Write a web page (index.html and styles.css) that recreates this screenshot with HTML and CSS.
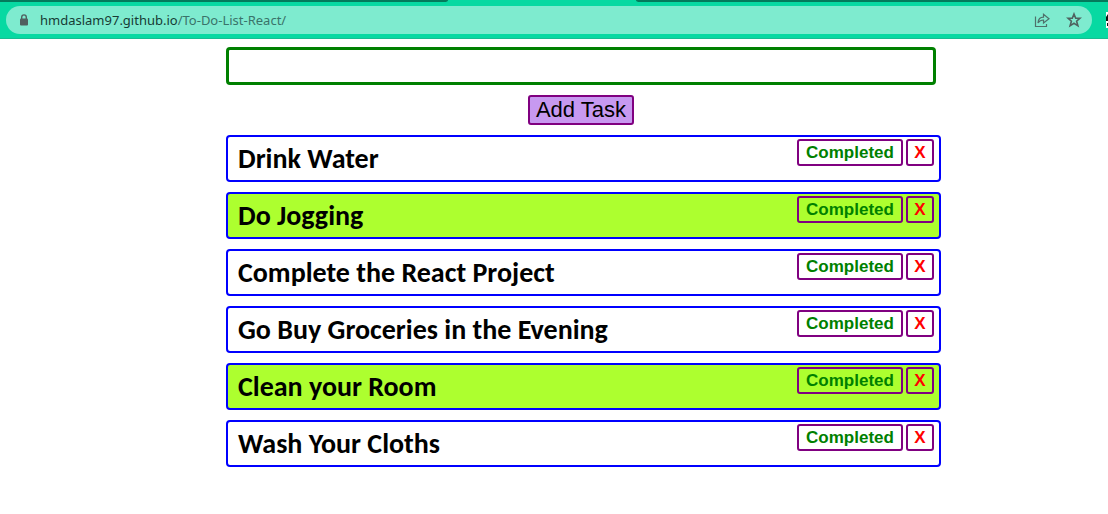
FILE: index.html
```html
<!DOCTYPE html>
<html lang="en">
<head>
<meta charset="utf-8">
<title>To-Do List</title>
<link rel="stylesheet" href="styles.css">
</head>
<body>
<header class="browser">
  <div class="tabs"><span class="tab-left"></span><span class="tab-right"></span></div>
  <div class="toolbar">
    <div class="address">
      <svg class="lock" width="10" height="12" viewBox="0 0 10 12" aria-hidden="true"><path d="M2.7 5V3.2a2.3 2.3 0 0 1 4.6 0V5" fill="none" stroke="#50605f" stroke-width="1.4"/><rect x="1" y="4.5" width="8" height="7" rx="1" fill="#50605f"/></svg>
      <a class="url" href="#"><span class="host">hmdaslam97.github.io</span>/To-Do-List-React/</a>
      <button class="icon" aria-label="Share"><svg width="16" height="16" viewBox="0 0 16 16" fill="none" stroke="#4f716b" stroke-width="1.2"><path d="M1.500 4.500V14.500H12.500V12"/><path d="M4 11C4.300 7 6.500 5.200 9.500 5.200V2.300L15 6.700L9.500 11V8C7 8 5.300 9 4 11Z"/></svg></button>
      <button class="icon" aria-label="Bookmark"><svg width="16" height="16" viewBox="0 0 16 16" fill="none" stroke="#4f625f" stroke-width="1.600"><path d="M8 2L9.700 6.200H14L10.600 9.200L11.900 13.800L8 11.300L4.100 13.800L5.400 9.200L2 6.200H6.300Z"/></svg></button>
    </div>
    <svg class="extension" width="2" height="16" viewBox="0 0 2 16" aria-hidden="true"><rect width="2" height="16" fill="#fff"/><path d="M2 2L0 5V9H2ZM2 11H1V14H2Z" fill="#111"/></svg>
  </div>
</header>
<main class="todo">
  <form class="entry">
    <input class="task-input" type="text" aria-label="New task">
    <button class="add" type="button">Add Task</button>
  </form>
  <ul class="list">
    <li class="task"><span class="name">Drink Water</span><button class="action done">Completed</button><button class="action remove">X</button></li>
    <li class="task finished"><span class="name">Do Jogging</span><button class="action done">Completed</button><button class="action remove">X</button></li>
    <li class="task"><span class="name">Complete the React Project</span><button class="action done">Completed</button><button class="action remove">X</button></li>
    <li class="task"><span class="name">Go Buy Groceries in the Evening</span><button class="action done">Completed</button><button class="action remove">X</button></li>
    <li class="task finished"><span class="name">Clean your Room</span><button class="action done">Completed</button><button class="action remove">X</button></li>
    <li class="task"><span class="name">Wash Your Cloths</span><button class="action done">Completed</button><button class="action remove">X</button></li>
  </ul>
</main>
</body>
</html>
```
FILE: styles.css
```css
* { box-sizing: border-box; }
body { margin: 0; background: #fff; font-family: "Liberation Sans", Arial, sans-serif; }
.browser { background: #07d9a2; border-bottom: 1px solid #18bd92; }
.tabs { display: flex; justify-content: space-between; height: 2px; }
.tab-left, .tab-right { background: #047a5c; }
.tab-left { width: 448px; border-bottom-right-radius: 4px 2px; }
.tab-right { width: 472px; border-bottom-left-radius: 4px 2px; }
.toolbar { display: flex; align-items: center; padding: 4px 0 4px 6px; }
.address { flex: 1; display: flex; align-items: center; height: 28px; margin-right: 14px; padding: 0 10px 0 13px; border-radius: 14px; background: #7eebcf; }
.lock { margin-right: 11px; }
.url { flex: 1; color: #3a736a; font: 13px/20px "Noto Sans", "Open Sans", sans-serif; text-decoration: none; }
.host { color: #173b35; }
.icon { display: flex; margin-left: 16px; padding: 0; border: 0; background: none; }
.todo { padding: 8px 167px 8px 226px; }
.entry { display: flex; flex-direction: column; align-items: center; gap: 10px; margin: 0 5px 10px 0; }
.task-input { width: 100%; height: 38px; padding: 4px 8px; border: 3px solid green; border-radius: 4px; background: #fff; font-size: 22px; }
.add { height: 30px; padding: 0 6px; border: 2px solid purple; border-radius: 3px; background: #c799f0; color: #000; font: 22px/26px "Liberation Sans", Arial, sans-serif; }
.list { display: flex; flex-direction: column; gap: 10px; margin: 0; padding: 0; list-style: none; }
.task { display: flex; align-items: flex-start; gap: 3px; padding: 2px 5px 2px 10px; border: 2px solid blue; border-radius: 4px; background: #fff; }
.finished { background: #adff2f; }
.name { flex: 1; padding-top: 1px; font: bold 28px/38px Calibri, Carlito, Lato, sans-serif; }
.action { height: 27px; padding: 0 6px; border: 2px solid purple; border-radius: 3px; background: transparent; font: bold 17px/23px "Liberation Sans", Arial, sans-serif; }
.done { min-width: 106px; color: green; }
.remove { min-width: 28px; color: red; }
```
